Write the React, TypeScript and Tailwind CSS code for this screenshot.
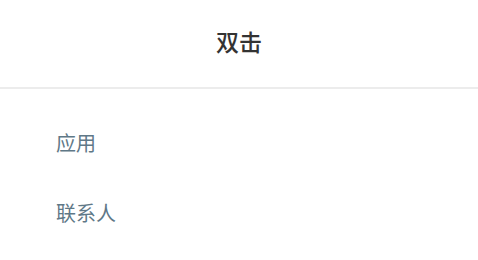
import React from "react";

export default function App() {
  const items = ["应用", "联系人"];
  return (
    <div
      className="w-[478px] h-[260px] bg-white overflow-hidden"
      style={{ fontFamily: '"Noto Sans CJK SC", "Noto Sans", sans-serif' }}
    >
      <div className="h-[89px] pb-[4px] flex items-center justify-center border-b-2 border-[#ececec]">
        <span className="text-[23px] font-medium text-[#333333] leading-none">双击</span>
      </div>
      <div className="pt-[19px] pl-[56px]">
        {items.map((t) => (
          <div key={t} className="h-[70px] flex items-center">
            <span className="text-[20px] text-[#5f7887] leading-none">{t}</span>
          </div>
        ))}
      </div>
    </div>
  );
}
